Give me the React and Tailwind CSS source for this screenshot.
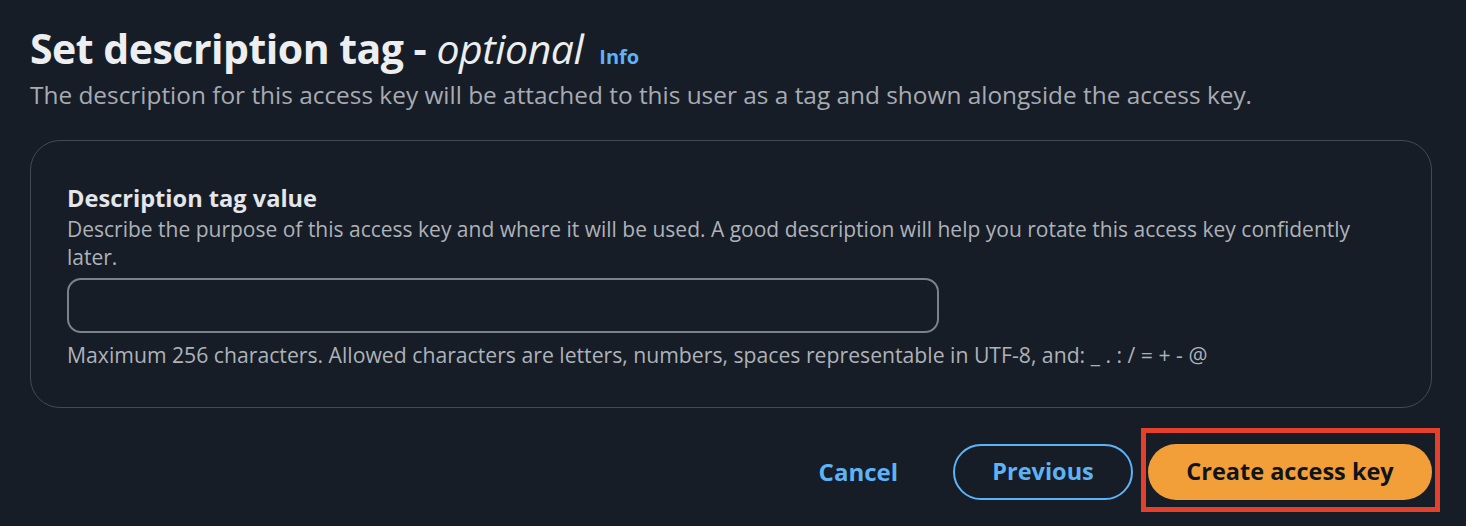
import React from "react";

export default function App() {
   return (
      <div className="min-h-[526px] w-full bg-[#161d26] pl-[30px] pr-[34px] pt-[20px] font-['Open_Sans',sans-serif]">
         {/* Header */}
         <div className="flex items-baseline">
            <h1 className="text-[41px] leading-[56px] font-bold tracking-[-0.5px] text-[#eceef0]">
               Set description tag - <span className="font-normal italic">optional</span>
            </h1>
            <a className="ml-[16px] text-[20px] font-bold text-[#5db3f8]">Info</a>
         </div>
         <p className="mt-[4px] text-[24.4px] leading-[30px] text-[#a7abb3]">
            The description for this access key will be attached to this user as a tag and shown alongside the access key.
         </p>

         {/* Container */}
         <div className="mt-[30px] rounded-[30px] border border-[#424a57] px-[36px] pt-[42px] pb-[39px]">
            <label className="block text-[23.6px] leading-[30px] font-bold text-[#e4e6ea]">
               Description tag value
            </label>
            <p className="mt-[2px] text-[21px] leading-[28px] text-[#aeb2b9]">
               Describe the purpose of this access key and where it will be used. A good description will help you rotate this access key confidently later.
            </p>
            <input
               type="text"
               className="mt-[7px] block h-[55px] w-[872px] rounded-[14px] border-[2.5px] border-[#7c828c] bg-transparent px-4 text-[21px] text-white outline-none"
            />
            <p className="mt-[9px] text-[21.2px] leading-[26px] text-[#aeb2b9]">
               Maximum 256 characters. Allowed characters are letters, numbers, spaces representable in UTF-8, and: _ . : / = + - @
            </p>
         </div>

         {/* Actions */}
         <div className="mt-[36px] flex items-center justify-end gap-[15px]">
            <button className="mr-[40px] text-[24px] font-bold text-[#5db3f8]">Cancel</button>
            <button className="h-[56px] w-[180px] rounded-full border-[2.5px] border-[#5db3f8] text-[23.5px] font-bold text-[#5db3f8]">
               Previous
            </button>
            <div className="relative">
               <button className="h-[56px] w-[284px] rounded-full bg-[#f39f39] text-[23.5px] font-bold text-[#0f141a]">
                  Create access key
               </button>
               <span className="pointer-events-none absolute -top-[16px] -bottom-[12px] -left-[7px] -right-[8px] border-[5px] border-[#e5402c]"></span>
            </div>
         </div>
      </div>
   );
}
